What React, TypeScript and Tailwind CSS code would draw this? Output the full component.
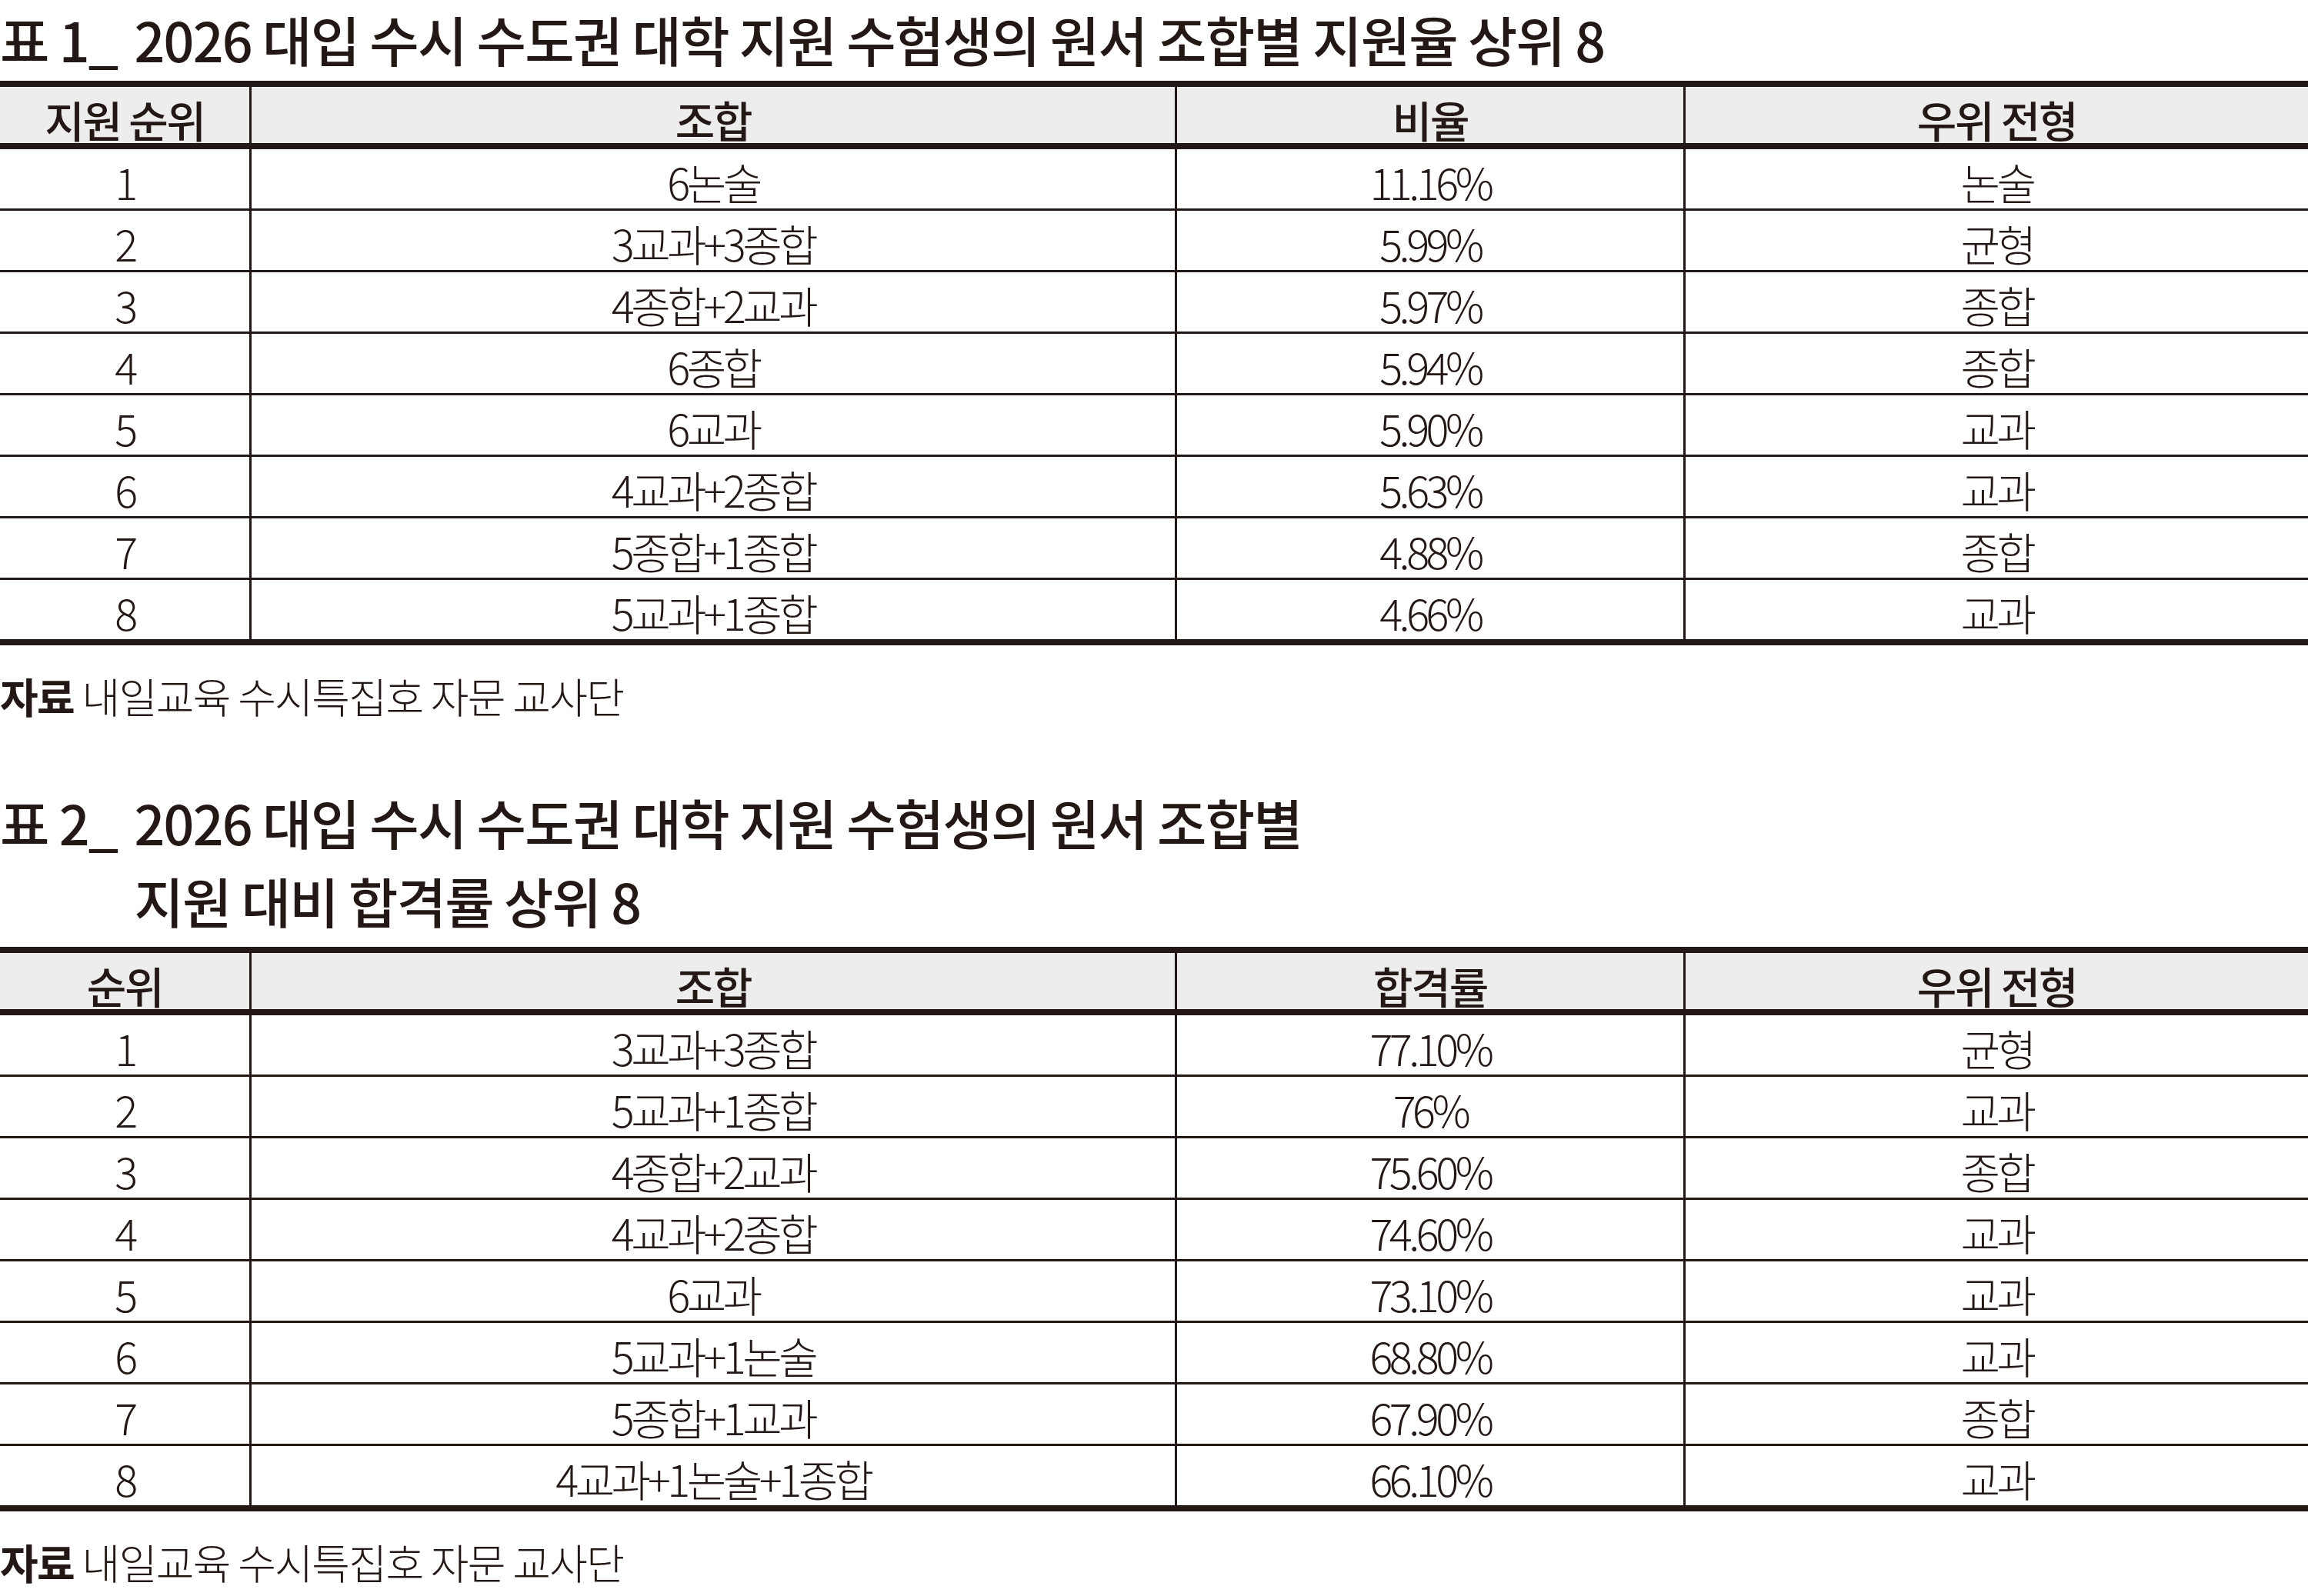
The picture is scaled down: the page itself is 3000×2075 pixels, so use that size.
import React from "react";

const cols = "grid grid-cols-[324px_1203px_661px_1fr]";
const ink = "text-[#231815]";

const rows1 = [
  ["1", "6논술", "11.16%", "논술"],
  ["2", "3교과+3종합", "5.99%", "균형"],
  ["3", "4종합+2교과", "5.97%", "종합"],
  ["4", "6종합", "5.94%", "종합"],
  ["5", "6교과", "5.90%", "교과"],
  ["6", "4교과+2종합", "5.63%", "교과"],
  ["7", "5종합+1종합", "4.88%", "종합"],
  ["8", "5교과+1종합", "4.66%", "교과"],
];

const rows2 = [
  ["1", "3교과+3종합", "77.10%", "균형"],
  ["2", "5교과+1종합", "76%", "교과"],
  ["3", "4종합+2교과", "75.60%", "종합"],
  ["4", "4교과+2종합", "74.60%", "교과"],
  ["5", "6교과", "73.10%", "교과"],
  ["6", "5교과+1논술", "68.80%", "교과"],
  ["7", "5종합+1교과", "67.90%", "종합"],
  ["8", "4교과+1논술+1종합", "66.10%", "교과"],
];

function DataTable({ head, rows }: { head: string[]; rows: string[][] }) {
  return (
    <div className="border-y-[8px] border-[#231815]">
      <div className={`${cols} h-[81px] border-b-[8px] border-[#231815] bg-[#ededed]`}>
        {head.map((h, i) => (
          <div
            key={h}
            className={`flex items-center justify-center text-[56px] font-medium tracking-[-0.04em] ${
              i > 0 ? "border-l-[3px] border-[#231815]" : ""
            }`}
          >
            {h}
          </div>
        ))}
      </div>
      {rows.map((r, ri) => (
        <div
          key={ri}
          className={`${cols} ${
            ri < rows.length - 1 ? "h-[80px] border-b-[3px] border-[#231815]" : "h-[77px]"
          }`}
        >
          {r.map((c, i) => (
            <div
              key={i}
              className={`flex items-center justify-center text-[56px] font-light tracking-[-0.08em] ${
                i > 0 ? "border-l-[3px] border-[#231815]" : ""
              }`}
            >
              {c}
            </div>
          ))}
        </div>
      ))}
    </div>
  );
}

function Source() {
  return (
    <p className="mt-[36px] text-[54px] leading-[60px] tracking-[-0.03em]">
      <span className="font-bold">자료</span>{" "}
      <span className="font-light">내일교육 수시특집호 자문 교사단</span>
    </p>
  );
}

export default function App() {
  return (
    <div
      className={`w-[3000px] h-[2075px] bg-white ${ink} overflow-hidden`}
      style={{ fontFamily: '"Noto Sans CJK KR", sans-serif' }}
    >
      <div className="flex pt-[10px] mb-[13px] text-[70px] font-medium leading-[82px] tracking-[-0.025em]">
        <span className="shrink-0 mr-[22px]">표 1_</span>
        <span>2026 대입 수시 수도권 대학 지원 수험생의 원서 조합별 지원율 상위 8</span>
      </div>
      <DataTable head={["지원 순위", "조합", "비율", "우위 전형"]} rows={rows1} />
      <Source />

      <div className="flex mt-[83px] mb-[9px] text-[70px] font-medium leading-[102px] tracking-[-0.025em]">
        <span className="shrink-0 mr-[22px]">표 2_</span>
        <span>
          2026 대입 수시 수도권 대학 지원 수험생의 원서 조합별
          <br />
          지원 대비 합격률 상위 8
        </span>
      </div>
      <DataTable head={["순위", "조합", "합격률", "우위 전형"]} rows={rows2} />
      <Source />
    </div>
  );
}
